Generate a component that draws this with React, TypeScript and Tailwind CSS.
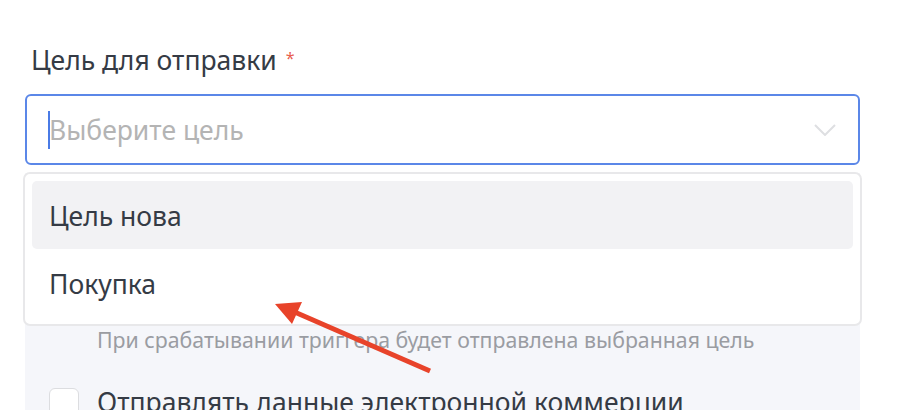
import React from 'react';

const font = { fontFamily: '"Noto Sans", "Open Sans", sans-serif' };

const App: React.FC = () => {
  return (
    <div className="relative h-[410px] w-[904px] overflow-hidden bg-white" style={font}>
      <div className="w-[835px] ml-[25px] pt-[42px]">
        {/* Label */}
        <label className="flex items-start pl-[6px] text-[26.5px] leading-[36px] text-[#353b45]">
          Цель для отправки
          <span className="ml-[9px] mt-[-2px] text-[16px] text-[#e8604f]">*</span>
        </label>

        {/* Select */}
        <div className="relative mt-[16px]">
          <div className="flex h-[71px] items-center rounded-[6px] border-2 border-[#5b87e8] bg-white pl-[21px] pr-[22px]">
            <span className="h-[38px] w-[2px] bg-[#4a7be6]" />
            <span className="ml-[-1px] flex-1 pt-[2px] text-[26.5px] text-[#b4b4b4]">Выберите цель</span>
            <svg width="22" height="12" viewBox="0 0 22 12" fill="none">
              <path d="M1 1l10 10L21 1" stroke="#dedfe2" strokeWidth="2" />
            </svg>
          </div>

          {/* Dropdown */}
          <div className="absolute left-[-2px] right-[-2px] top-[78px] z-10 rounded-[7px] border-2 border-[#e8e8ea] bg-white px-[7px] py-[7px]">
            <div className="flex h-[68px] items-center rounded-[5px] bg-[#f2f2f4] pl-[17px] pt-[4px] text-[26.5px] text-[#353b45]">
              Цель нова
            </div>
            <div className="flex h-[68px] items-center pl-[17px] pt-[4px] text-[26.5px] text-[#353b45]">
              Покупка
            </div>
          </div>
        </div>

        {/* Settings panel */}
        <div className="mt-[8px] bg-[#f5f6fa] pt-[153px] pb-[20px]">
          <p className="pl-[72px] text-[21.3px] leading-[28px] text-[#9a9ca2]">
            При срабатывании триггера будет отправлена выбранная цель
          </p>
          <div className="mt-[34px] flex items-start gap-[18px] pl-[24px]">
            <span className="h-[30px] w-[30px] shrink-0 rounded-[6px] border border-[#dcdde0] bg-white" />
            <span className="mt-[-4px] text-[26.5px] leading-[36px] text-[#353b45]">
              Отправлять данные электронной коммерции
            </span>
          </div>
        </div>
      </div>

      {/* Annotation arrow */}
      <svg className="absolute left-0 top-0 z-20" width="904" height="410" viewBox="0 0 904 410">
        <line x1="430" y1="371" x2="290" y2="310" stroke="#e8432a" strokeWidth="5" />
        <polygon points="275,304 302,302 292,324" fill="#e8432a" />
      </svg>
    </div>
  );
};

export default App;
